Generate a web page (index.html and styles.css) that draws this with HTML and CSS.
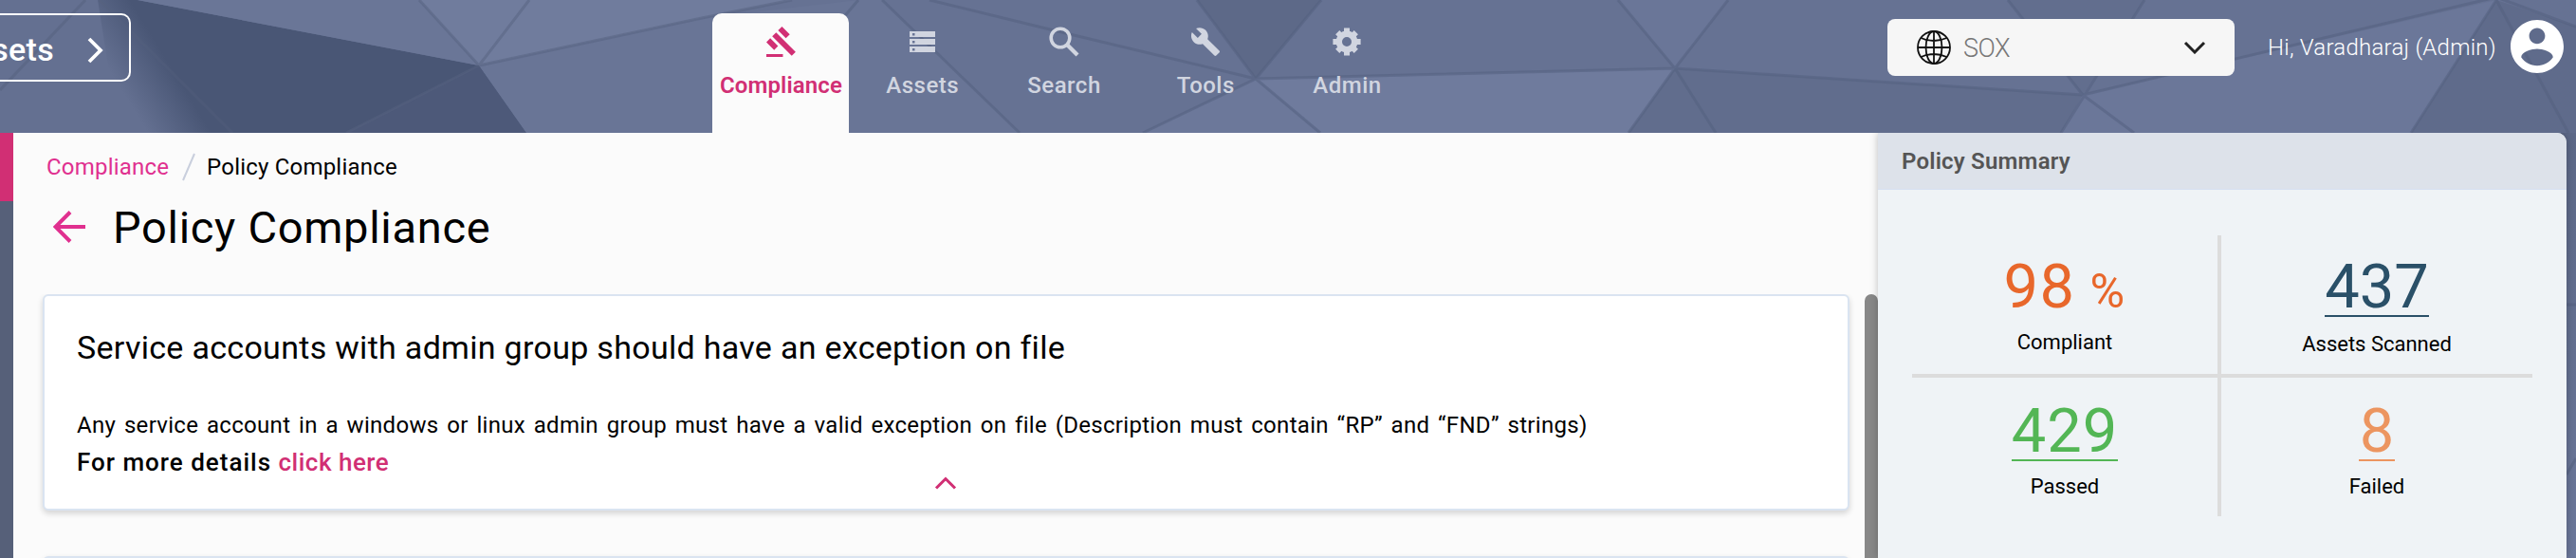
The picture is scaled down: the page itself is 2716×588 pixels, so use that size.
FILE: index.html
```html
<!DOCTYPE html>
<html lang="en">
<head>
<meta charset="utf-8">
<title>Policy Compliance</title>
<link rel="stylesheet" href="styles.css">
</head>
<body>
<svg class="backdrop" viewBox="0 0 2716 588" aria-hidden="true">
  <defs>
    <linearGradient id="fold" gradientUnits="userSpaceOnUse" x1="125" y1="90" x2="174" y2="60">
      <stop offset="0" stop-color="#647091"/><stop offset="1" stop-color="#495675"/>
    </linearGradient>
    <linearGradient id="edge" x1="0" y1="0" x2="0" y2="1">
      <stop offset="0" stop-color="#5c6887"/><stop offset="1" stop-color="#6b779a"/>
    </linearGradient>
  </defs>
  <rect width="2716" height="588" fill="#667293"/>
  <path fill="#647091" d="M0 0H105L245 140H0z"/>
  <path fill="url(#fold)" d="M103 0H145L505 69 555 140H125z"/>
  <path fill="#4d5979" d="M505 69 555 140H365z"/>
  <path fill="#6a7697" d="M145 0H442L505 69z"/>
  <path fill="#707c9d" d="M442 0H835L740 19 505 69z"/>
  <path fill="#697596" d="M505 69 740 19 905 0H930L1075 140H555z"/>
  <path fill="#5d6988" d="M1262 0H1393L1324 83z"/>
  <path fill="#6c789a" d="M1324 83 1205 140H1392z"/>
  <path fill="#6f7b9d" d="M1324 83 1392 140H1717L1766 72z"/>
  <path fill="#6a7698" d="M1706 0H1822L1766 72z"/>
  <path fill="#616d8d" d="M1766 72 1717 140H2173L2196 100z"/>
  <path fill="#626e8e" d="M2117 0H2261L2196 100z"/>
  <path fill="#6b7799" d="M2196 100 2632 0 2542 140H2173z"/>
  <path fill="#5f6b8b" d="M2632 0 2716 28V140H2542z"/>
  <rect x="2700" y="140" width="16" height="448" fill="url(#edge)"/>
  <g fill="none" stroke="#536080" stroke-width="3" opacity=".55">
    <path d="M930 0 1075 140M905 0 888 20M980 0 1107 31 1324 83 1262 0M1393 0 1324 83 1205 140M1324 83 1392 140M1324 83 1766 72 1706 0M1822 0 1766 72 2196 100 2117 0M1766 72 1717 140M1766 72 1809 140M2261 0 2173 140M2196 100 2250 140M2196 100 2632 -3 2716 28M2632 0 2542 140M2632 0 2708 140M2706 321H2716M2706 500 2716 483"/>
  </g>
  <g fill="none" stroke="#56627f" stroke-width="3" opacity=".5">
    <path d="M90 0 0 95M505 69 365 140M442 0 505 69 558 0M505 69 740 19 835 0"/>
    <path opacity=".6" d="M105 0 245 140"/>
  </g>
</svg>

<header class="topbar">
  <div class="asset-switch">
    <span>Assets</span>
    <svg class="switch-arrow" viewBox="0 0 20 30"><path d="M3 3 15 15 3 27"/></svg>
  </div>
  <nav class="nav">
    <a class="tab tab-active">
      <span class="tab-icon"><svg width="31" height="32" viewBox="1 1 21.3 22"><path fill="currentColor" d="M1 21h12v2H1zM5.245 8.07l2.83-2.827 14.14 14.142-2.828 2.828zM12.317 1l5.657 5.656-2.83 2.83-5.654-5.66zM3.825 9.485l5.657 5.657-2.828 2.828-5.657-5.657z"/></svg></span>
      <span class="tab-label">Compliance</span>
    </a>
    <a class="tab">
      <span class="tab-icon"><svg width="27" height="22" viewBox="0 0 27 22"><path fill="currentColor" fill-rule="evenodd" d="M0 0H27V6H0zM3 2V4.500H5.500V2zM0 8H27V14H0zM3 10V12.500H5.500V10zM0 16H27V22H0zM3 18V20.500H5.500V18z"/></svg></span>
      <span class="tab-label">Assets</span>
    </a>
    <a class="tab">
      <span class="tab-icon"><svg width="32" height="32" viewBox="0 0 32 32" fill="none" stroke="currentColor"><circle cx="12" cy="12" r="9.800" stroke-width="3.600"/><path stroke-width="4.200" d="M19 19 30 30"/></svg></span>
      <span class="tab-label">Search</span>
    </a>
    <a class="tab">
      <span class="tab-icon"><svg width="30" height="30" viewBox="1 1 22 22"><path fill="currentColor" d="M22.700 19l-9.100-9.100c.9-2.300.4-5-1.500-6.900-2-2-5-2.400-7.400-1.300L9 6 6 9 1.600 4.700C.4 7.100.9 10.100 2.900 12.100c1.900 1.900 4.600 2.400 6.900 1.500l9.100 9.100c.4.4 1 .4 1.400 0l2.300-2.300c.5-.4.5-1.100.1-1.400z"/></svg></span>
      <span class="tab-label">Tools</span>
    </a>
    <a class="tab">
      <span class="tab-icon"><svg width="30" height="30" viewBox="-15 -15 30 30" fill="none" stroke="currentColor"><circle r="8.200" stroke-width="6.400"/><path stroke-width="6" stroke-linejoin="round" d="M0-14.600V-9M0 9V14.600M-14.600 0H-9M9 0H14.600M-9.800-9.800-7-7M9.800 9.800 7 7M9.800-9.800 7-7M-9.800 9.800-7 7"/></svg></span>
      <span class="tab-label">Admin</span>
    </a>
  </nav>
  <div class="account">
    <div class="select">
      <svg class="globe" viewBox="0 0 36 36"><circle cx="18" cy="18" r="17"/><ellipse cx="18" cy="18" rx="8.500" ry="17"/><path d="M18 1V35M1 18H35M4.500 8Q18 14 31.500 8M4.500 28Q18 22 31.500 28"/></svg>
      <span class="select-value">SOX</span>
      <svg class="select-arrow" viewBox="0 0 24 14"><path d="M2 2 12 12 22 2"/></svg>
    </div>
    <span class="greeting">Hi, Varadharaj (Admin)</span>
    <svg class="avatar" viewBox="2 2 20 20"><path fill="#fff" d="M12 2C6.480 2 2 6.480 2 12s4.480 10 10 10 10-4.480 10-10S17.520 2 12 2zm0 3c1.660 0 3 1.340 3 3s-1.340 3-3 3-3-1.340-3-3 1.340-3 3-3zm0 14.200c-2.500 0-4.710-1.280-6-3.220.03-1.990 4-3.080 6-3.080 1.990 0 5.970 1.090 6 3.080-1.290 1.940-3.500 3.220-6 3.220z"/></svg>
  </div>
</header>

<div class="workspace">
  <aside class="rail"><div class="rail-current"></div></aside>
  <main class="page">
    <div class="heading">
      <div class="crumbs">
        <a class="crumb-link">Compliance</a>
        <svg class="crumb-sep" viewBox="0 0 14 30"><path d="M13 1 1 29"/></svg>
        <span>Policy Compliance</span>
      </div>
      <div class="title-row">
        <svg class="back" viewBox="0 0 34 34"><path d="M34 17H3M18 1.500 2.500 17 18 32.500"/></svg>
        <h1 class="title">Policy Compliance</h1>
      </div>
    </div>
    <div class="scroll">
      <div class="cards">
        <section class="card">
          <h2 class="card-title">Service accounts with admin group should have an exception on file</h2>
          <p class="card-text">Any service account in a windows or linux admin group must have a valid exception on file (Description must contain “RP” and “FND” strings)</p>
          <p class="card-more">For more details <a class="more-link">click here</a></p>
          <svg class="collapse" viewBox="0 0 24 14"><path d="M2 12.500 12 2.500 22 12.500"/></svg>
        </section>
        <section class="card"></section>
      </div>
      <div class="scrollbar"></div>
    </div>
  </main>
  <aside class="summary">
    <h3 class="summary-title">Policy Summary</h3>
    <div class="stats">
      <div class="stat"><span class="num num-rate">98<small>%</small></span><span class="stat-label">Compliant</span></div>
      <div class="stat"><span class="num num-link num-scanned">437</span><span class="stat-label">Assets Scanned</span></div>
      <div class="stat"><span class="num num-link num-passed">429</span><span class="stat-label">Passed</span></div>
      <div class="stat"><span class="num num-link num-failed">8</span><span class="stat-label">Failed</span></div>
    </div>
  </aside>
</div>
</body>
</html>
```

FILE: styles.css
```css
* { box-sizing: border-box; }
body {
  margin: 0;
  width: 2716px;
  height: 588px;
  overflow: hidden;
  display: flex;
  flex-direction: column;
  font-family: Roboto, "Liberation Sans", sans-serif;
  color: #000;
}
h1, h2, h3, p { margin: 0; font-weight: 400; }
svg { display: block; flex: none; }
.backdrop { position: absolute; inset: 0; width: 2716px; height: 588px; z-index: -1; }

.topbar { height: 140px; flex: none; display: flex; align-items: flex-start; }
.asset-switch {
  width: 138px; height: 72px; margin: 14px 613px 0 0; padding-right: 25px;
  border: 2px solid #fff; border-left: 0; border-radius: 0 10px 10px 0;
  display: flex; align-items: center; justify-content: flex-end; gap: 34px;
  color: #fff; font-size: 34px; font-weight: 500; letter-spacing: .3px;
  overflow: hidden;
}
.asset-switch span { margin-top: 3px; }
.switch-arrow { width: 20px; height: 30px; margin-top: 5px; fill: none; stroke: #fff; stroke-width: 3.8; }

.nav { display: flex; gap: 5.25px; padding-top: 14px; }
.tab {
  width: 144px; height: 126px; padding-top: 12px;
  display: flex; flex-direction: column; align-items: center; gap: 14px;
  color: #d1d5e0; border-radius: 10px 10px 0 0;
}
.tab-active { background: #fbfbfb; color: #d12f74; }
.tab-icon { height: 36px; display: flex; align-items: center; }
.tab-label { padding-left: 1px; font-size: 24px; line-height: 28px; font-weight: 500; letter-spacing: .5px; }
.tab-active .tab-label { font-weight: 600; letter-spacing: .1px; }

.account { display: flex; align-items: center; margin: 20px 13px 0 auto; height: 60px; }
.select {
  width: 366px; height: 60px; padding: 0 30px 0 31px; border-radius: 8px;
  background: #f6f6f6; display: flex; align-items: center;
}
.globe { width: 36px; height: 36px; fill: none; stroke: #111; stroke-width: 1.8; }
.select-value { margin: 2px 0 0 13px; font-size: 27px; color: #777; font-weight: 300; letter-spacing: -.5px; }
.select-arrow { width: 24px; height: 14px; margin-left: auto; fill: none; stroke: #222; stroke-width: 3; }
.greeting { width: 241px; margin-left: 35px; color: #fff; font-size: 24px; line-height: 28px; font-weight: 300; letter-spacing: .25px; white-space: nowrap; }
.avatar { width: 56px; height: 56px; margin: -2px 0 0 15px; }

.workspace { flex: 1; min-height: 0; display: flex; padding-right: 10px; }
.rail { width: 14px; flex: none; background: #566079; }
.rail-current { height: 72px; background: #d12f74; }
.page { width: 1966px; flex: none; background: #fbfbfb; display: flex; flex-direction: column; }
.heading { height: 170px; flex: none; padding: 21px 0 0 35px; }
.crumbs { display: flex; height: 30px; font-size: 24px; line-height: 30px; letter-spacing: .2px; }
.crumb-link { color: #e0308f; }
.crumb-sep { width: 14px; height: 30px; margin: 0 12px 0 14px; fill: none; stroke: #c9cfdd; stroke-width: 2; }
.title-row { display: flex; align-items: center; margin: 19px 0 0 7px; height: 60px; }
.back { width: 34px; height: 34px; margin-top: -2px; fill: none; stroke: #e0308f; stroke-width: 4; }
.title { margin-left: 29px; font-size: 47px; line-height: 60px; letter-spacing: .7px; }

.scroll { flex: 1; min-height: 0; display: flex; overflow: hidden; }
.cards { display: flex; flex-direction: column; gap: 48px; margin-left: 31px; width: 1905px; }
.card {
  height: 228px; flex: none; padding: 30px 0 0 34px;
  background: #fff; border: 2px solid #dae4f1; border-radius: 6px;
  box-shadow: 0 3px 6px rgba(0, 0, 0, .16);
}
.card-title { font-size: 34px; line-height: 48px; letter-spacing: .3px; }
.card-text { margin-top: 38px; font-size: 24px; line-height: 40px; letter-spacing: .3px; word-spacing: 2.5px; white-space: nowrap; }
.card-more { margin-top: -1px; font-size: 26px; line-height: 40px; font-weight: 500; letter-spacing: 1px; }
.more-link { color: #d12f74; letter-spacing: .5px; }
.collapse { width: 24px; height: 14px; margin: -5px 0 0 904px; fill: none; stroke: #d12f74; stroke-width: 3; }
.scrollbar { width: 14px; margin-left: auto; background: #888; border-radius: 7px 7px 0 0; }

.summary { flex: 1; background: #eff3f6; border-radius: 0 10px 0 0; box-shadow: 0 0 8px rgba(0, 0, 0, .25); clip-path: inset(0 -10px 0 -10px); }
.summary-title {
  height: 60px; padding-left: 25px; background: #dde2ea; border-bottom: 1px solid #d6e0f1;
  border-radius: 0 10px 0 0; color: #555; font-size: 24px; line-height: 61px; font-weight: 600; letter-spacing: .2px;
}
.stats { display: grid; grid-template: 150px 146px / 326px 328px; padding: 48px 36px 0; }
.stat { display: flex; flex-direction: column; align-items: center; padding-top: 26px; }
.stat:nth-child(odd) { border-right: 4px solid #dcdcdc; }
.stat:nth-child(-n+2) { padding-top: 24px; border-bottom: 4px solid #dcdcdc; }
.num { font-size: 65px; line-height: 60px; }
.num-rate { display: flex; align-items: baseline; height: 60px; letter-spacing: 1.5px; }
.num small { font-size: 50px; margin-left: 15px; }
.num-link { border-bottom: 2px solid; }
.num-rate { color: #e8672b; }
.num-scanned { color: #2a5068; }
.num-passed { color: #53b655; letter-spacing: 1px; }
.num-failed { color: #ec9560; padding: 0 1px; }
.stat-label { margin-top: 12px; font-size: 22px; line-height: 30px; }
.stat:nth-child(-n+2) .stat-label { margin-top: 14px; line-height: 29px; }
```
